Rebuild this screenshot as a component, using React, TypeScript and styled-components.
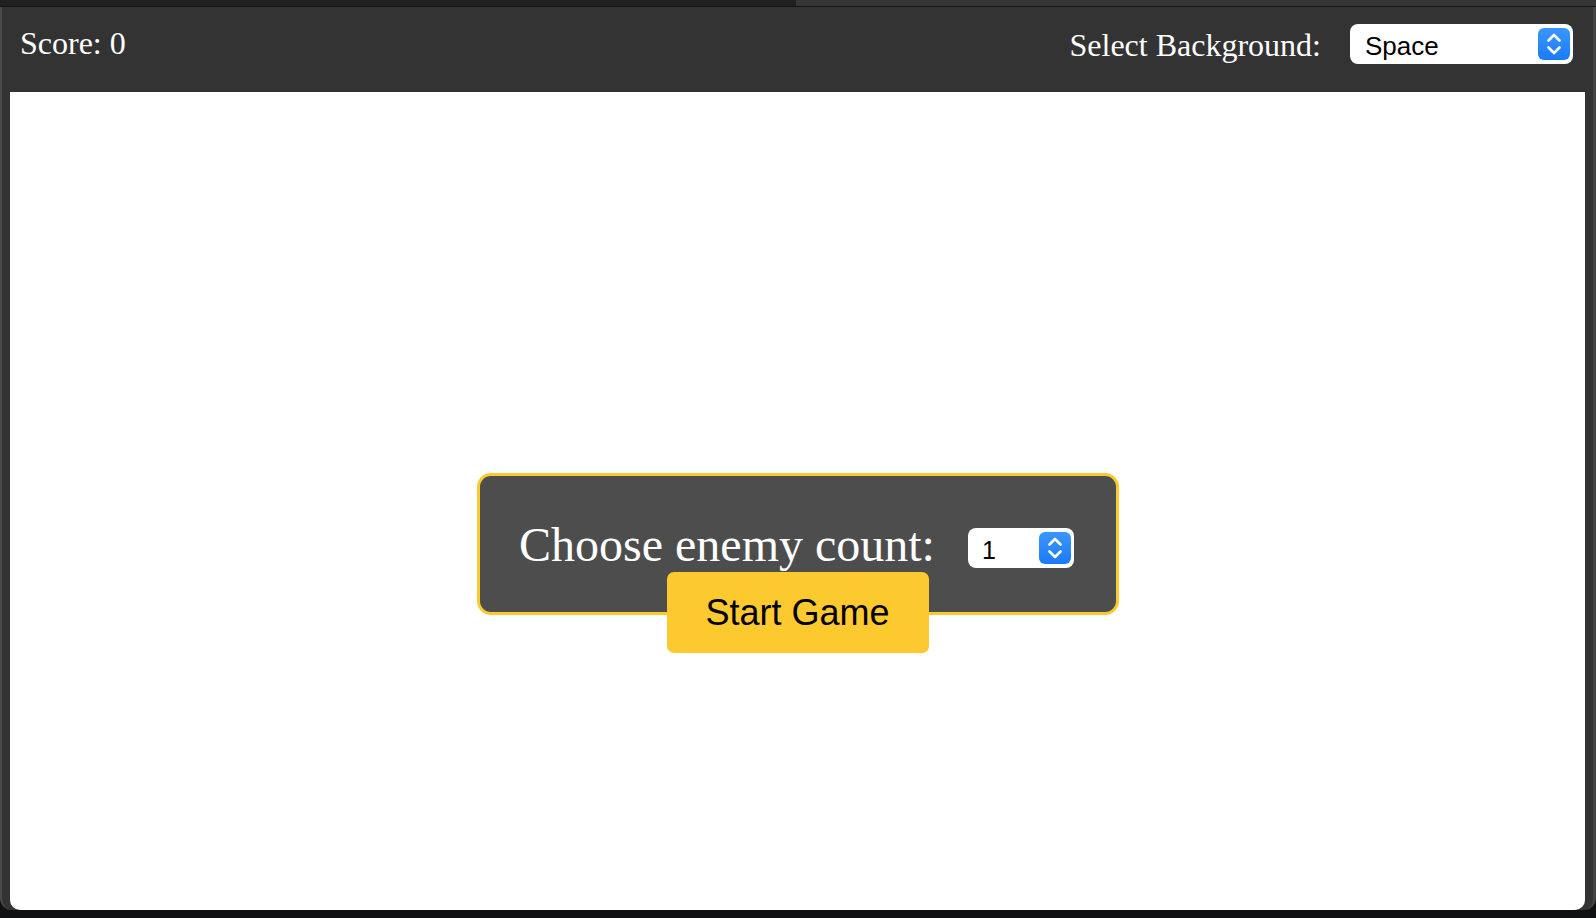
import styled, { createGlobalStyle } from "styled-components";

const GlobalStyle = createGlobalStyle`
  html, body {
    margin: 0;
    padding: 0;
    background: #101113;
  }
  * {
    box-sizing: border-box;
  }
`;

const Screen = styled.div`
  width: 1596px;
  height: 918px;
  background: #101113;
  overflow: hidden;
`;

const Window = styled.div`
  height: 910px;
  background: #333333;
  border-left: 2px solid #4a4a4a;
  border-right: 3px solid #444444;
  border-radius: 0 0 12px 12px;
  display: flex;
  flex-direction: column;
`;

const TabStrip = styled.div`
  height: 7px;
  display: flex;
  border-bottom: 1px solid #151515;
  margin: 0 -3px 0 -2px;
`;

const Tab = styled.div<{ $active?: boolean }>`
  height: 100%;
  flex: ${(p) => (p.$active ? "0 0 796px" : "1")};
  background: ${(p) => (p.$active ? "#1f201f" : "#353638")};
`;

const Header = styled.header`
  height: 85px;
  display: flex;
  align-items: flex-start;
  justify-content: space-between;
  padding: 0 20px 0 18px;
  font-family: "Liberation Serif", "Times New Roman", serif;
  color: #ffffff;
`;

const Score = styled.div`
  font-size: 32px;
  margin-top: 18px;
`;

const Controls = styled.div`
  display: flex;
  align-items: flex-start;
  gap: 29px;
`;

const Label = styled.label<{ $top: number }>`
  font-size: 32px;
  margin-top: ${(p) => p.$top}px;
`;

const SelectWrap = styled.div<{ $w: number; $top?: number }>`
  position: relative;
  width: ${(p) => p.$w}px;
  height: 40px;
  margin-top: ${(p) => p.$top ?? 0}px;
`;

const Select = styled.select<{ $size: number; $pad: number }>`
  appearance: none;
  -webkit-appearance: none;
  width: 100%;
  height: 100%;
  border: none;
  border-radius: 8px;
  background: #ffffff;
  color: #000000;
  font-family: "Liberation Sans", Arial, sans-serif;
  font-size: ${(p) => p.$size}px;
  padding: 4px 0 0 ${(p) => p.$pad}px;
  outline: none;
`;

const Stepper = styled.span`
  position: absolute;
  top: 4px;
  right: 3px;
  width: 32px;
  height: 32px;
  border-radius: 6px;
  background: linear-gradient(#3a97ff, #1b7bf6);
  display: flex;
  align-items: center;
  justify-content: center;
  pointer-events: none;
`;

const Canvas = styled.main`
  flex: 1;
  margin: 0 8px 0 8px;
  background: #ffffff;
  border-radius: 0 0 10px 10px;
  display: flex;
  flex-direction: column;
  align-items: center;
  padding-top: 381px;
`;

const Dialog = styled.div`
  width: 642px;
  height: 142px;
  border: 3px solid #fcc92e;
  border-radius: 14px;
  background: #4d4d4d;
  display: flex;
  flex-direction: column;
  align-items: center;
  padding-top: 41px;
`;

const Row = styled.div`
  display: flex;
  align-items: center;
  gap: 33px;
  margin-right: 2px;
`;

const Prompt = styled.span`
  font-family: "Liberation Serif", "Times New Roman", serif;
  font-size: 48px;
  color: #ffffff;
`;

const StartButton = styled.button`
  margin-top: 0;
  width: 262px;
  height: 81px;
  border: none;
  border-radius: 7px;
  background: #fcc92e;
  color: #000000;
  font-family: "Liberation Sans", Arial, sans-serif;
  font-size: 36px;
  cursor: pointer;
  flex-shrink: 0;
`;

const Chevrons = () => (
  <svg width="32" height="32" viewBox="0 0 32 32" fill="none">
    <path
      d="M10.5 12.5 L16 7 L21.5 12.5 M10.5 19.5 L16 25 L21.5 19.5"
      stroke="#ffffff"
      strokeWidth="2.6"
      strokeLinecap="round"
      strokeLinejoin="round"
    />
  </svg>
);

const App = () => {
  return (
    <Screen>
      <GlobalStyle />
      <Window>
        <TabStrip>
          <Tab $active />
          <Tab />
        </TabStrip>
        <Header>
          <Score>Score: 0</Score>
          <Controls>
            <Label $top={20}>Select Background:</Label>
            <SelectWrap $w={223} $top={17}>
              <Select $size={26} $pad={15} defaultValue="space">
                <option value="space">Space</option>
                <option value="forest">Forest</option>
                <option value="desert">Desert</option>
              </Select>
              <Stepper>
                <Chevrons />
              </Stepper>
            </SelectWrap>
          </Controls>
        </Header>
        <Canvas>
          <Dialog>
            <Row>
              <Prompt>Choose enemy count:</Prompt>
              <SelectWrap $w={106} $top={6}>
                <Select $size={25} $pad={14} defaultValue="1">
                  {[1, 2, 3, 4, 5].map((n) => (
                    <option key={n} value={n}>
                      {n}
                    </option>
                  ))}
                </Select>
                <Stepper>
                  <Chevrons />
                </Stepper>
              </SelectWrap>
            </Row>
            <StartButton>Start Game</StartButton>
          </Dialog>
        </Canvas>
      </Window>
    </Screen>
  );
};

export default App;
